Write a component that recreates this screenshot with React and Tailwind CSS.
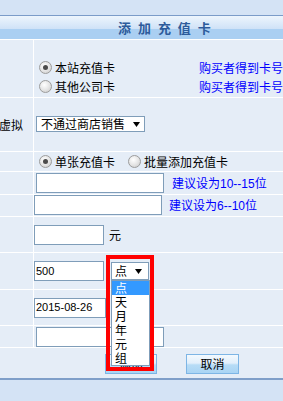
import React from "react";

const cjk = "font-['Noto_Sans_CJK_SC','Noto_Sans',sans-serif]";
const num = "font-['Liberation_Sans',Arial,sans-serif]";

function Radio({ checked }) {
  return (
    <span className="w-[13px] h-[13px] shrink-0 rounded-full border border-[#9c9c9c] bg-[radial-gradient(circle_at_40%_35%,#ffffff_0%,#e6e6e6_50%,#c8c8c8_100%)] flex items-center justify-center">
      {checked && <span className="w-[5px] h-[5px] rounded-full bg-[#4b4b4b]" />}
    </span>
  );
}

function Row({ h, label, children, last }) {
  return (
    <div className={`flex ${h} border-b border-white`}>
      <div className="w-[34px] shrink-0 border-r border-white flex items-center justify-end pr-[10px] whitespace-nowrap">
        {label}
      </div>
      <div className="flex-1 min-w-0">{children}</div>
    </div>
  );
}

function Arrow({ className }) {
  return (
    <svg width="7" height="5" viewBox="0 0 7 5" className={className}>
      <polygon points="0,0 7,0 3.5,5" fill="#000" />
    </svg>
  );
}

export default function App() {
  const input = "bg-white border border-[#7f9db9] h-[20px]";
  return (
    <div className={`w-[283px] h-[401px] overflow-hidden bg-[#d4e3f5] text-[12px] text-black ${cjk}`}>
      <div className="h-[15px]" />
      <div className="border-t border-[#7b9cc9] h-[24px] bg-[linear-gradient(to_bottom,#edf5fd_0%,#cfe2f7_56%,#aacff2_56%,#aacff2_100%)] flex items-center pl-[118px] pb-[1px]">
        <span className="text-[13px] font-bold text-[#2d5b9b] tracking-[2px] whitespace-nowrap leading-none">
          添 加 充 值 卡
        </span>
      </div>
      <div className="bg-[#e5edf7] border-t border-white">
        {/* Row 1 */}
        <Row h="h-[58px]">
          <div className="pt-[18px] pl-[5px] flex whitespace-nowrap">
            <div className="w-[163px] flex flex-col">
              <div className="h-[19px] flex items-center gap-[3px]">
                <Radio checked />
                <span>本站充值卡</span>
              </div>
              <div className="h-[19px] flex items-center gap-[3px]">
                <Radio />
                <span>其他公司卡</span>
              </div>
            </div>
            <div className="flex flex-col text-[#0000ff]">
              <div className="h-[19px] flex items-center">购买者得到卡号</div>
              <div className="h-[19px] flex items-center">购买者得到卡号</div>
            </div>
          </div>
        </Row>
        {/* Row 2 */}
        <Row h="h-[54px]" label="虚拟">
          <div className="h-full flex items-center pl-[2px] pb-[1px]">
            <div className="w-[109px] h-[16px] bg-white border border-[#7f9db9] flex items-center pl-[4px] pr-[4px] justify-between whitespace-nowrap">
              <span className="leading-none">不通过商店销售</span>
              <Arrow />
            </div>
          </div>
        </Row>
        {/* Row 3 */}
        <Row h="h-[20px]">
          <div className="h-full flex items-center pl-[5px] whitespace-nowrap">
            <Radio checked />
            <span className="ml-[3px]">单张充值卡</span>
            <span className="ml-[13px]"><Radio /></span>
            <span className="ml-[3px]">批量添加充值卡</span>
          </div>
        </Row>
        {/* Row 4 */}
        <Row h="h-[23px]">
          <div className="h-full flex items-center pl-[2px] whitespace-nowrap">
            <div className={`${input} w-[128px]`} />
            <span className="ml-[8px] text-[#0000ff]">
              建议设为<span className={num}>10--15</span>位
            </span>
          </div>
        </Row>
        {/* Row 5 */}
        <Row h="h-[22px]">
          <div className="h-full flex items-center whitespace-nowrap pb-[1px]">
            <div className={`${input} w-[128px]`} />
            <span className="ml-[7px] text-[#0000ff]">
              建议设为<span className={num}>6--10</span>位
            </span>
          </div>
        </Row>
        {/* Row 6 */}
        <Row h="h-[36px]">
          <div className="h-full flex items-center whitespace-nowrap">
            <div className={`${input} w-[70px]`} />
            <span className="ml-[5px]">元</span>
          </div>
        </Row>
        {/* Row 7 */}
        <Row h="h-[37px]">
          <div className="h-full flex items-center whitespace-nowrap">
            <div className={`${input} w-[70px] flex items-center pl-[1px] ${num} text-[11px]`}>500</div>
            <div className="relative ml-[7px] z-20">
              <div className="w-[38px] h-[18px] bg-white border border-[#7f9db9] flex items-center justify-between pl-[3px] pr-[6px]">
                <span className="leading-none">点</span>
                <Arrow />
              </div>
              <div className="absolute left-0 top-[18px] w-[39px] bg-white border border-[#7f9db9] flex flex-col">
                {["点", "天", "月", "年", "元", "组"].map((t, i) => (
                  <div
                    key={t}
                    className={`h-[14px] flex items-center pl-[3px] leading-none ${i === 0 ? "bg-[#3399ff] text-white" : ""}`}
                  >
                    {t}
                  </div>
                ))}
              </div>
              <div className="absolute left-[-5px] top-[-7px] w-[48px] h-[116px] border-[4px] border-[#ff0000] pointer-events-none" />
            </div>
          </div>
        </Row>
        {/* Row 8 */}
        <Row h="h-[36px]">
          <div className="h-full flex items-center whitespace-nowrap">
            <div className={`${input} w-[72px] flex items-center pl-[1px] ${num} text-[11px]`}>2015-08-26</div>
          </div>
        </Row>
        {/* Row 9 */}
        <Row h="h-[22px]">
          <div className="h-full flex items-start pt-[1px] pl-[2px]">
            <div className={`${input} w-[128px]`} />
          </div>
        </Row>
        {/* Buttons */}
        <div className="h-[30px] flex items-center pl-[105px] gap-[29px] pt-[1px]">
          <button className="w-[52px] h-[20px] border border-[#7db5e5] bg-[linear-gradient(to_bottom,#f3f9fe_0%,#e2effb_45%,#b7dcf6_55%,#a9d4f4_100%)] flex items-center justify-center leading-none">
            添加
          </button>
          <button className="w-[53px] h-[20px] border border-[#7db5e5] bg-[linear-gradient(to_bottom,#f3f9fe_0%,#e2effb_45%,#b7dcf6_55%,#a9d4f4_100%)] flex items-center justify-center leading-none">
            取消
          </button>
        </div>
      </div>
      <div className="border-t-2 border-[#7f9fc9]" />
    </div>
  );
}
